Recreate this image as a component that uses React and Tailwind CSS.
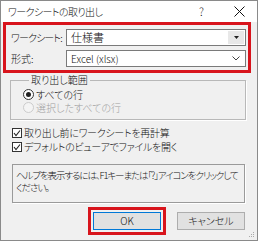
import React from "react";

const font = {
  fontFamily: '"Noto Sans CJK JP", "Noto Sans", sans-serif',
};

function Check() {
  return (
    <span className="w-[10px] h-[10px] border border-[#333] bg-white flex items-center justify-center shrink-0">
      <svg width="8" height="8" viewBox="0 0 8 8">
        <polyline points="1,4 3,6.5 7,1.5" fill="none" stroke="#222" strokeWidth="1.1" />
      </svg>
    </span>
  );
}

export default function App() {
  return (
    <div
      className="w-[258px] h-[241px] bg-[#f0f0f0] border border-[#8a8a8a] text-[10px] leading-none text-[#111] font-light relative overflow-hidden [font-feature-settings:'palt']"
      style={font}
    >
      {/* title bar */}
      <div className="h-[21px] bg-white flex items-center pl-[7px]">
        <span className="text-[10px] tracking-[-0.6px]">ワークシートの取り出し</span>
        <span className="ml-auto mr-[30px] text-[11px]">?</span>
        <svg width="11" height="11" viewBox="0 0 11 11" className="mr-[12px]">
          <path d="M0.5 0.5 L10.5 10.5 M10.5 0.5 L0.5 10.5" stroke="#111" strokeWidth="1" />
        </svg>
      </div>

      {/* red highlight box */}
      <div className="mx-[2px] h-[51px] w-[248px] border-[3px] border-[#d8141c] pt-[4px] pl-[5px] pr-[2px] flex flex-col gap-[4px]">
        <div className="flex items-center h-[17px]">
          <span className="w-[55px] whitespace-nowrap tracking-[-0.9px]">ワークシート:</span>
          <div className="flex-1 h-[17px] bg-white border border-[#7a7a7a] flex items-center pl-[4px] pr-[1px]">
            <span className="text-[11px]">仕様書</span>
            <span className="ml-auto w-[16px] h-[13px] bg-[#e8e8e8] flex items-center justify-center">
              <svg width="5" height="3" viewBox="0 0 5 3">
                <path d="M0 0 H5 L2.5 3 Z" fill="#222" />
              </svg>
            </span>
          </div>
        </div>
        <div className="flex items-center h-[17px]">
          <span className="w-[55px]">形式:</span>
          <div className="flex-1 h-[17px] bg-white border border-[#7a7a7a] flex items-center pl-[4px] pr-[5px]">
            <span>Excel (xlsx)</span>
            <svg width="8" height="5" viewBox="0 0 8 5" className="ml-auto">
              <path d="M0.5 0.5 L4 4 L7.5 0.5" fill="none" stroke="#444" strokeWidth="1" />
            </svg>
          </div>
        </div>
      </div>

      {/* group box */}
      <fieldset className="ml-[9px] mt-[1px] w-[236px] h-[46px] border border-[#b8b8b8] shadow-[1px_1px_0_#fff] px-[12px] pt-[3px] flex flex-col gap-[2px]">
        <legend className="ml-[6px] px-[2px] leading-[12px]">取り出し範囲</legend>
        <label className="flex items-center gap-[2px] h-[11px]">
          <span className="w-[11px] h-[11px] rounded-full border border-[#333] bg-white flex items-center justify-center">
            <span className="w-[5px] h-[5px] rounded-full bg-[#222]" />
          </span>
          <span>すべての行</span>
        </label>
        <label className="flex items-center gap-[2px] h-[11px] text-[#a0a0a0]">
          <span className="w-[11px] h-[11px] rounded-full border border-[#cccccc] bg-[#f4f4f4]" />
          <span>選択したすべての行</span>
        </label>
      </fieldset>

      {/* checkboxes */}
      <div className="ml-[11px] mt-[7px] flex flex-col gap-[2px] tracking-[-0.3px]">
        <div className="flex items-center gap-[2px] h-[12px]">
          <Check />
          <span>取り出し前にワークシートを再計算</span>
        </div>
        <div className="flex items-center gap-[2px] h-[12px]">
          <Check />
          <span>デフォルトのビューアでファイルを開く</span>
        </div>
      </div>

      {/* help box */}
      <div className="ml-[11px] mt-[11px] w-[233px] h-[39px] border border-[#9a9a9a] shadow-[1px_1px_0_#fff] pl-[3px] pt-[4px] leading-[12px] text-[9.5px] tracking-[-1.1px] whitespace-nowrap">
        ヘルプを表示するには、F1キーまたは「?」アイコンをクリックして
        <br />
        ください。
      </div>

      {/* buttons */}
      <div className="flex items-center mt-[4px] pl-[87px]">
        <div className="w-[78px] h-[28px] border-[3px] border-[#d8141c] flex items-center justify-center">
          <div className="w-[68px] h-[18px] border border-[#0078d7] bg-[#e1e1e1] flex items-center justify-center">
            OK
          </div>
        </div>
        <div className="ml-[11px] w-[68px] h-[18px] border border-[#adadad] bg-[#e1e1e1] flex items-center justify-center">
          キャンセル
        </div>
      </div>

      {/* size grip */}
      <svg width="7" height="7" viewBox="0 0 7 7" className="absolute right-[2px] bottom-[2px]">
        <rect x="5" y="1" width="1" height="1" fill="#aaa" />
        <rect x="3" y="3" width="1" height="1" fill="#aaa" />
        <rect x="5" y="3" width="1" height="1" fill="#aaa" />
        <rect x="1" y="5" width="1" height="1" fill="#aaa" />
        <rect x="3" y="5" width="1" height="1" fill="#aaa" />
        <rect x="5" y="5" width="1" height="1" fill="#aaa" />
      </svg>
    </div>
  );
}
